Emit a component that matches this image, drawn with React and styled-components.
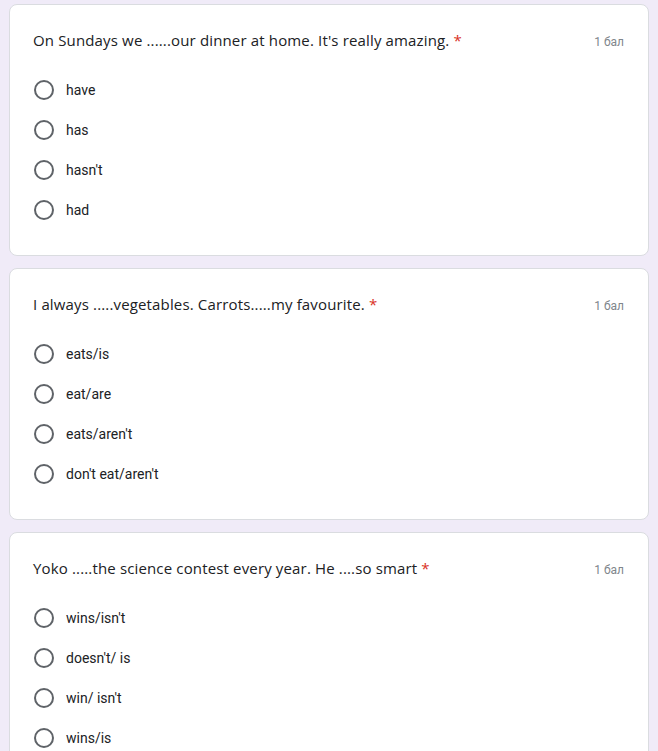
import React from 'react'
import styled, { createGlobalStyle } from 'styled-components'

const GlobalStyle = createGlobalStyle`
    html, body {
        margin: 0;
        padding: 0;
        background: #f0ebf8;
    }
`;

const Page = styled.div`
    display: flex;
    flex-direction: column;
    gap: 12px;
    padding: 4px 9px 0 9px;
    height: 751px;
    overflow: hidden;
    box-sizing: border-box;
`;

const Card = styled.div`
    flex: none;
    background: #fff;
    border: 1px solid #dadce0;
    border-radius: 8px;
    padding: 23px 24px 25px 23px;
    box-sizing: border-box;
`;

const Header = styled.div`
    display: flex;
    justify-content: space-between;
    align-items: baseline;
    height: 24px;
    line-height: 24px;
    margin-bottom: 18px;
`;

const Title = styled.div`
    font-family: 'Open Sans', sans-serif;
    font-size: 15px;
    color: #202124;
    letter-spacing: 0.15px;
`;

const Star = styled.span`
    color: #d93025;
    padding-left: 4px;
`;

const Points = styled.div`
    font-family: Roboto, sans-serif;
    font-size: 12px;
    color: #80868b;
`;

const Options = styled.div`
    display: flex;
    flex-direction: column;
`;

const Option = styled.label`
    display: flex;
    align-items: center;
    height: 40px;
    gap: 12px;
    padding-left: 1px;
`;

const Radio = styled.span`
    width: 20px;
    height: 20px;
    box-sizing: border-box;
    border: 2px solid #5f6368;
    border-radius: 50%;
`;

const OptionText = styled.span`
    font-family: Roboto, sans-serif;
    font-size: 14px;
    color: #202124;
`;

const questions = [
    {
        title: "On Sundays we ......our dinner at home. It's really amazing.",
        options: ['have', 'has', "hasn't", 'had'],
    },
    {
        title: 'I always .....vegetables. Carrots.....my favourite.',
        options: ['eats/is', 'eat/are', "eats/aren't", "don't eat/aren't"],
    },
    {
        title: 'Yoko .....the science contest every year. He ....so smart',
        options: ["wins/isn't", "doesn't/ is", "win/ isn't", 'wins/is'],
    },
];

export default function App() {
    return (
        <>
            <GlobalStyle />
            <Page>
                {questions.map((q, i) => (
                    <Card key={i}>
                        <Header>
                            <Title>{q.title}<Star>*</Star></Title>
                            <Points>1 бал</Points>
                        </Header>
                        <Options>
                            {q.options.map(o => (
                                <Option key={o}>
                                    <Radio />
                                    <OptionText>{o}</OptionText>
                                </Option>
                            ))}
                        </Options>
                    </Card>
                ))}
            </Page>
        </>
    )
}
